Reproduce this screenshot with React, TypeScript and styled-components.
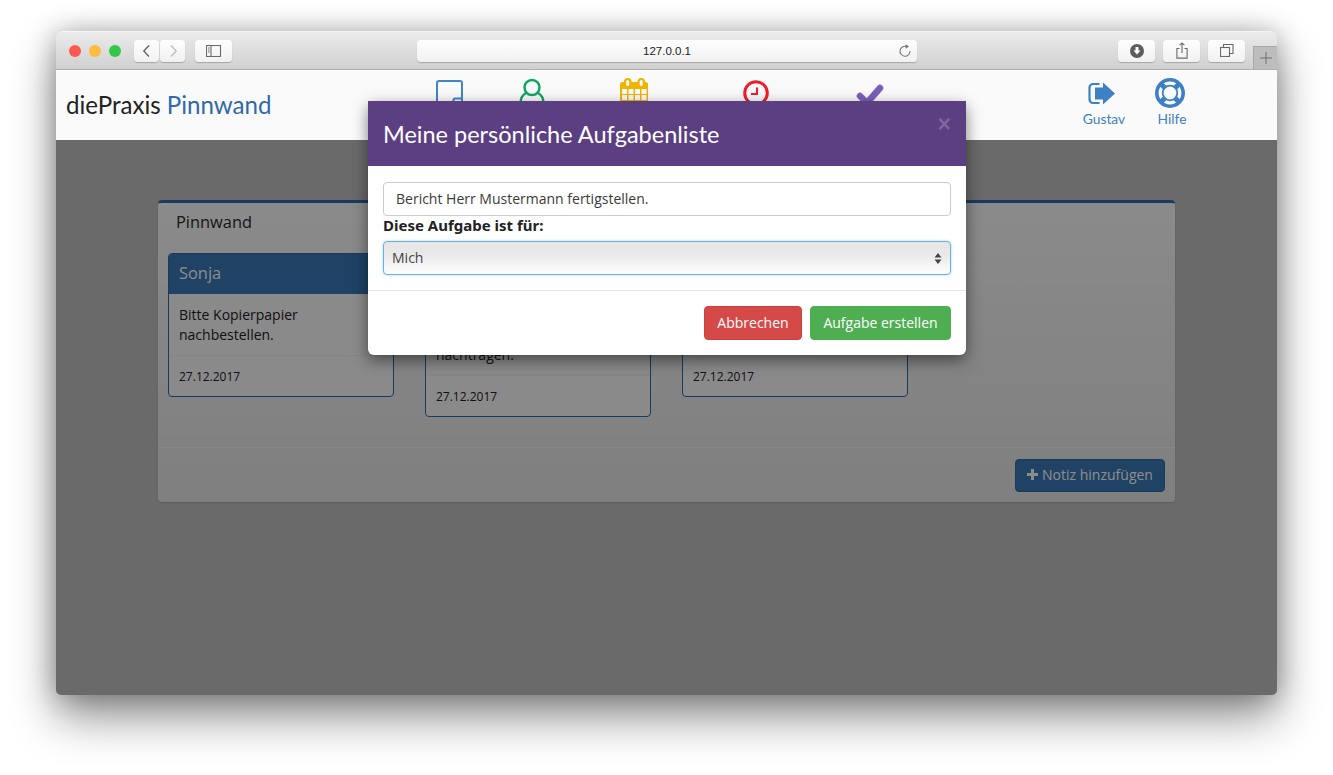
import React from "react";
import styled, { createGlobalStyle } from "styled-components";

const Global = createGlobalStyle`
  html, body { margin: 0; padding: 0; background: #fff; }
  body { font-family: "Open Sans", "Noto Sans", sans-serif; color: #222; overflow: hidden; }
  * { box-sizing: border-box; }
`;

const Stage = styled.div`
  width: 1333px;
  height: 775px;
  padding: 31px 56px 0;
  overflow: hidden;
`;
const Win = styled.div`
  position: relative;
  width: 1221px;
  height: 664px;
  border-radius: 6px 6px 5px 5px;
  display: flex;
  flex-direction: column;
  box-shadow: 0 22px 45px rgba(0,0,0,.44), 0 0 26px rgba(0,0,0,.26);
  background: #c2c2c2;
`;
const Toolbar = styled.div`
  height: 39px;
  flex: none;
  display: flex;
  align-items: center;
  padding-left: 13px;
  border-radius: 6px 6px 0 0;
  background: linear-gradient(#ebebeb, #d0d0d0);
  border-top: 1px solid #f5f5f5;
  border-bottom: 1px solid #aeaeae;
`;
const Light = styled.span<{ $c: string }>`
  width: 12px;
  height: 12px;
  border-radius: 50%;
  background: ${(p) => p.$c};
  margin-right: 8px;
`;
const ToolGroup = styled.div<{ $ml: number }>`
  display: flex;
  gap: 1px;
  margin-left: ${(p) => p.$ml}px;
`;
const ToolBtn = styled.div<{ $w: number }>`
  width: ${(p) => p.$w}px;
  height: 22px;
  border-radius: 4px;
  background: linear-gradient(#fefefe, #f1f1f1);
  box-shadow: 0 1px 1px rgba(0,0,0,.22);
  display: flex;
  align-items: center;
  justify-content: center;
`;
const UrlBar = styled(ToolBtn)`
  position: relative;
  margin-left: 185px;
  font-size: 11.5px;
  color: #222;
  font-family: "Liberation Sans", sans-serif;
`;
const Reload = styled.svg`
  position: absolute;
  right: 5px;
  top: 4px;
`;
const RightTools = styled.div`
  display: flex;
  gap: 8px;
  margin-left: 201px;
`;
const NewTab = styled.div`
  width: 24px;
  height: 24px;
  margin-left: 8px;
  align-self: flex-end;
  margin-bottom: -1px;
  background: #bdbdbd;
  border-left: 1px solid #a8a8a8;
  border-top: 1px solid #a8a8a8;
  border-bottom: 1px solid #aeaeae;
  display: flex;
  align-items: center;
  justify-content: center;
`;
const Navbar = styled.div`
  height: 70px;
  flex: none;
  display: flex;
  background: #fafafa;
`;
const Brand = styled.div`
  width: 344px;
  padding: 21px 0 0 10px;
  font-family: "Lato", "Open Sans", sans-serif;
  font-size: 24.1px;
  line-height: 28px;
  color: #222;
`;
const BrandAccent = styled.span`
  color: #2f69a8;
`;
const NavItem = styled.div<{ $w: number; $c: string; $top: number }>`
  width: ${(p) => p.$w}px;
  padding-top: ${(p) => p.$top}px;
  display: flex;
  flex-direction: column;
  align-items: center;
  color: ${(p) => p.$c};
  font-family: "Lato", "Open Sans", sans-serif;
  font-size: 13.8px;
  line-height: 18px;
`;
const NavRight = styled.div`
  margin-left: auto;
  margin-right: 67px;
  display: flex;
`;
const NavLabel = styled.span<{ $mt: number }>`
  margin-top: ${(p) => p.$mt}px;
`;
const NudgedIcon = styled.svg`
  margin-right: 5px;
`;
const Main = styled.div`
  position: relative;
  flex: 1;
  padding: 60px 102px 0;
  border-radius: 0 0 5px 5px;
  background: #c2c2c2;
`;
const Backdrop = styled.div`
  position: absolute;
  inset: 0;
  background: rgba(0,0,0,.45);
  border-radius: 0 0 5px 5px;
`;
const Panel = styled.section`
  height: 302px;
  border-radius: 4px;
  border-top: 3px solid #2a6eb0;
  background: linear-gradient(#fcfcfc, #e8e8e8);
  box-shadow: 0 1px 2px rgba(0,0,0,.15);
  display: flex;
  flex-direction: column;
`;
const PanelTitle = styled.h2`
  margin: 0;
  height: 50px;
  padding: 8px 0 0 18px;
  font-size: 16.4px;
  line-height: 22px;
  font-weight: 400;
  color: #2a2a2a;
`;
const CardRow = styled.div`
  display: flex;
  align-items: flex-start;
  gap: 30.7px;
  padding: 0 10px 30px;
`;
const Card = styled.article`
  width: 226.3px;
  border: 1px solid #2a6eb0;
  border-radius: 4px;
  overflow: hidden;
  background: #fbfbfb;
`;
const CardHead = styled.div`
  height: 40px;
  padding: 7px 10px 0;
  background: #3a79b8;
  color: #fff;
  font-size: 16.4px;
  line-height: 24px;
`;
const CardBody = styled.p`
  margin: 0;
  padding: 11px 10px 10px;
  font-size: 14px;
  line-height: 20px;
  color: #222;
  white-space: pre-line;
`;
const CardFoot = styled.div`
  height: 41px;
  padding: 12px 10px 0;
  border-top: 1px solid #f2f2f2;
  font-size: 12px;
  line-height: 18px;
  color: #222;
`;
const PanelFoot = styled.div`
  flex: 1;
  border-top: 1px solid #f6f6f6;
  padding: 11px 10px 0;
  display: flex;
  justify-content: flex-end;
  align-items: flex-start;
`;
const AddBtn = styled.button`
  width: 150px;
  height: 33px;
  border: 1px solid #2e6da4;
  border-radius: 4px;
  background: #3a79b8;
  color: #fff;
  font: 400 14px/20px "Open Sans", sans-serif;
  padding: 0 0 2px;
  display: flex;
  align-items: center;
  justify-content: center;
  gap: 4px;
`;
const Modal = styled.div`
  position: absolute;
  left: 312px;
  top: 70px;
  width: 598px;
  height: 254px;
  border-radius: 6px;
  background: #fff;
  box-shadow: 0 5px 15px rgba(0,0,0,.5);
  display: flex;
  flex-direction: column;
`;
const ModalHead = styled.div`
  position: relative;
  height: 65px;
  flex: none;
  padding: 16px 15px 0;
  background: #5b3f82;
  font-family: "Lato", "Open Sans", sans-serif;
  font-size: 23.5px;
  line-height: 34px;
  color: #fff;
`;
const Close = styled.span`
  position: absolute;
  right: 15px;
  top: 11px;
  font: 700 23px/24px "Liberation Sans", sans-serif;
  color: #7c689c;
`;
const ModalBody = styled.div`
  padding: 16px 15px 0;
  height: 124px;
  flex: none;
`;
const Input = styled.div`
  height: 34px;
  border: 1px solid #ccc;
  border-radius: 4px;
  padding: 6px 12px;
  font-size: 14px;
  line-height: 20px;
  color: #3a3a3a;
`;
const Label = styled.div`
  margin: -1px 0 6px;
  font: 700 15px/20px "Noto Sans", sans-serif;
  color: #222;
`;
const Select = styled.div`
  height: 34px;
  border: 1px solid #66afe9;
  border-radius: 4px;
  padding: 6px 8px;
  font-size: 14px;
  line-height: 20px;
  color: #444;
  background: linear-gradient(#e6e6e6 0%, #e9e9e9 40%, #fff 100%);
  box-shadow: 0 0 3px rgba(102,175,233,.5);
  display: flex;
  justify-content: space-between;
  align-items: center;
`;
const ModalFoot = styled.div`
  border-top: 1px solid #e5e5e5;
  padding: 15px 15px 0;
  display: flex;
  justify-content: flex-end;
  gap: 8px;
`;
const Btn = styled.button<{ $bg: string; $bd: string; $w: number }>`
  width: ${(p) => p.$w}px;
  height: 34px;
  padding: 0;
  border: 1px solid ${(p) => p.$bd};
  border-radius: 4px;
  background: ${(p) => p.$bg};
  color: #fff;
  font: 400 14px/20px "Open Sans", sans-serif;
`;

const Chevron = ({ d, c }: { d: string; c: string }) => (
  <svg width="12" height="16" viewBox="0 0 12 16"><path d={d} fill="none" stroke={c} strokeWidth="1.4" /></svg>
);

const S = { fill: "none", strokeWidth: 1.1, stroke: "#6a6a6a" };
const cols = [2, 8.5, 15, 21.5];
const rows = [11, 17, 23];

export default function App() {
  return (
    <Stage>
      <Global />
      <Win>
        <Toolbar>
          <Light $c="#fc5753" /><Light $c="#fdbc40" /><Light $c="#33c748" />
          <ToolGroup $ml={5}>
            <ToolBtn $w={25}><Chevron d="M8 2.5 2.8 8 8 13.5" c="#666" /></ToolBtn>
            <ToolBtn $w={25}><Chevron d="M4 2.5 9.2 8 4 13.5" c="#bdbdbd" /></ToolBtn>
          </ToolGroup>
          <ToolGroup $ml={10}>
            <ToolBtn $w={37}>
              <svg width="16" height="12" viewBox="0 0 16 12">
                <rect x=".5" y=".5" width="14" height="11" {...S} />
                <path d="M5 .5v11M2 3h1.6M2 5h1.6M2 7h1.6" {...S} />
              </svg>
            </ToolBtn>
          </ToolGroup>
          <UrlBar $w={500}>
            127.0.0.1
            <Reload width="14" height="14" viewBox="0 0 14 14">
              <path d="M8.4 2.4A5 5 0 1 0 12 7" fill="none" stroke="#777" strokeWidth="1.1" />
              <path d="M7.6 .2 11 2.4 7.6 4.8Z" fill="#777" />
            </Reload>
          </UrlBar>
          <RightTools>
            <ToolBtn $w={37}>
              <svg width="14" height="14" viewBox="0 0 14 14">
                <circle cx="7" cy="7" r="7" fill="#5c5c5c" />
                <path d="M5.5 3h3v3.6h2L7 10.6 3.5 6.6h2Z" fill="#fff" />
              </svg>
            </ToolBtn>
            <ToolBtn $w={37}>
              <svg width="12" height="17" viewBox="0 0 12 17">
                <path d="M3.5 6.5H.9v9.6h10.2V6.5H8.5M6 11V1M3.6 3.2 6 .9 8.4 3.2" {...S} />
              </svg>
            </ToolBtn>
            <ToolBtn $w={37}>
              <svg width="14" height="13" viewBox="0 0 14 13">
                <rect x=".5" y="3.5" width="9" height="9" {...S} />
                <path d="M3.5 3.5V.5H13v9H9.5" {...S} />
              </svg>
            </ToolBtn>
          </RightTools>
          <NewTab>
            <svg width="12" height="12" viewBox="0 0 12 12"><path d="M6 0v12M0 6h12" stroke="#6f6f6f" strokeWidth="1" /></svg>
          </NewTab>
        </Toolbar>
        <Navbar>
          <Brand>diePraxis <BrandAccent>Pinnwand</BrandAccent></Brand>
          <NavItem $w={98} $c="#3d80c4" $top={10}>
            <svg width="27" height="32" viewBox="0 0 27 32">
              <path d="M3 1h21a2 2 0 0 1 2 2v19l-9 9H3a2 2 0 0 1-2-2V3a2 2 0 0 1 2-2Z" fill="none" stroke="#4384c6" strokeWidth="2" />
              <path d="M25 18.5h-6a1.5 1.5 0 0 0-1.5 1.5V30" fill="none" stroke="#4384c6" strokeWidth="2" />
            </svg>
          </NavItem>
          <NavItem $w={68} $c="#0aa85f" $top={8}>
            <svg width="26" height="32" viewBox="0 0 26 32">
              <circle cx="13" cy="9.5" r="7.5" fill="none" stroke="#0aa85f" strokeWidth="2.4" />
              <path d="M7 15C3 17 1.5 21 1.5 26c3 3 20 3 23 0 0-5-1.5-9-5.5-11" fill="none" stroke="#0aa85f" strokeWidth="2.4" />
            </svg>
          </NavItem>
          <NavItem $w={136} $c="#f0b400" $top={8}>
            <svg width="28" height="30" viewBox="0 0 28 30">
              <rect x="0" y="4" width="28" height="26" rx="2.5" fill="#f0b400" />
              <rect x="4" y="0" width="7.5" height="9" rx="3.7" fill="#f0b400" />
              <rect x="17.5" y="0" width="7.5" height="9" rx="3.7" fill="#f0b400" />
              <rect x="6.2" y="2" width="3" height="6" rx="1.5" fill="#fafafa" />
              <rect x="19.7" y="2" width="3" height="6" rx="1.5" fill="#fafafa" />
              {rows.map((y) => cols.map((x) => <rect key={`${x}-${y}`} x={x} y={y} width="5" height="5" fill="#fafafa" />))}
            </svg>
          </NavItem>
          <NavItem $w={108} $c="#f01d2c" $top={10}>
            <svg width="26" height="26" viewBox="0 0 26 26">
              <circle cx="13" cy="13" r="11.3" fill="none" stroke="#f01d2c" strokeWidth="3" />
              <path d="M14 7.5V14H8" fill="none" stroke="#f01d2c" strokeWidth="2" />
            </svg>
          </NavItem>
          <NavItem $w={120} $c="#7c5fb9" $top={14}>
            <svg width="28" height="24" viewBox="0 0 28 24">
              <path d="M4 12 11 19 24 4" fill="none" stroke="#7c5fb9" strokeWidth="6.5" strokeLinecap="round" strokeLinejoin="miter" />
            </svg>
          </NavItem>
          <NavRight>
            <NavItem $w={60} $c="#3d80c4" $top={12}>
              <NudgedIcon width="27" height="23" viewBox="0 0 27 23">
                <path d="M11.5 2H5A3.5 3.5 0 0 0 1.5 5.5v12A3.5 3.5 0 0 0 5 21h6.5" fill="none" stroke="#3d80c4" strokeWidth="2.2" />
                <path d="M7 5.5h8V.5l12 11-12 11v-5H7Z" fill="#3d80c4" />
              </NudgedIcon>
              <NavLabel $mt={5}>Gustav</NavLabel>
            </NavItem>
            <NavItem $w={76} $c="#3d80c4" $top={8}>
              <NudgedIcon width="30" height="30" viewBox="0 0 30 30">
                <circle cx="15" cy="15" r="13.2" fill="none" stroke="#3d80c4" strokeWidth="3.6" />
                <circle cx="15" cy="15" r="7.3" fill="none" stroke="#3d80c4" strokeWidth="1.8" />
                <path d="M6 6 10 10M24 6 20 10M6 24 10 20M24 24 20 20" stroke="#3d80c4" strokeWidth="5" />
              </NudgedIcon>
              <NavLabel $mt={2}>Hilfe</NavLabel>
            </NavItem>
          </NavRight>
        </Navbar>
        <Main>
          <Panel>
            <PanelTitle>Pinnwand</PanelTitle>
            <CardRow>
              <Card>
                <CardHead>Sonja</CardHead>
                <CardBody>{"Bitte Kopierpapier\nnachbestellen."}</CardBody>
                <CardFoot>27.12.2017</CardFoot>
              </Card>
              <Card>
                <CardHead />
                <CardBody>{"\u00a0\n\u00a0\nnachtragen."}</CardBody>
                <CardFoot>27.12.2017</CardFoot>
              </Card>
              <Card>
                <CardHead />
                <CardBody>{"\u00a0\n\u00a0"}</CardBody>
                <CardFoot>27.12.2017</CardFoot>
              </Card>
            </CardRow>
            <PanelFoot>
              <AddBtn>
                <svg width="11" height="11" viewBox="0 0 11 11"><path d="M5.5 0v11M0 5.5h11" stroke="#fff" strokeWidth="3" /></svg>
                Notiz hinzufügen
              </AddBtn>
            </PanelFoot>
          </Panel>
          <Backdrop />
        </Main>
        <Modal>
          <ModalHead>Meine persönliche Aufgabenliste<Close>×</Close></ModalHead>
          <ModalBody>
            <Input>Bericht Herr Mustermann fertigstellen.</Input>
            <Label>Diese Aufgabe ist für:</Label>
            <Select>
              Mich
              <svg width="8" height="13" viewBox="0 0 8 13"><path d="M4 1 7.5 5.5H.5ZM4 12 .5 7.5h7Z" fill="#444" /></svg>
            </Select>
          </ModalBody>
          <ModalFoot>
            <Btn $w={98} $bg="#d54a48" $bd="#c9403c">Abbrechen</Btn>
            <Btn $w={141} $bg="#4fae52" $bd="#4cae4c">Aufgabe erstellen</Btn>
          </ModalFoot>
        </Modal>
      </Win>
    </Stage>
  );
}
